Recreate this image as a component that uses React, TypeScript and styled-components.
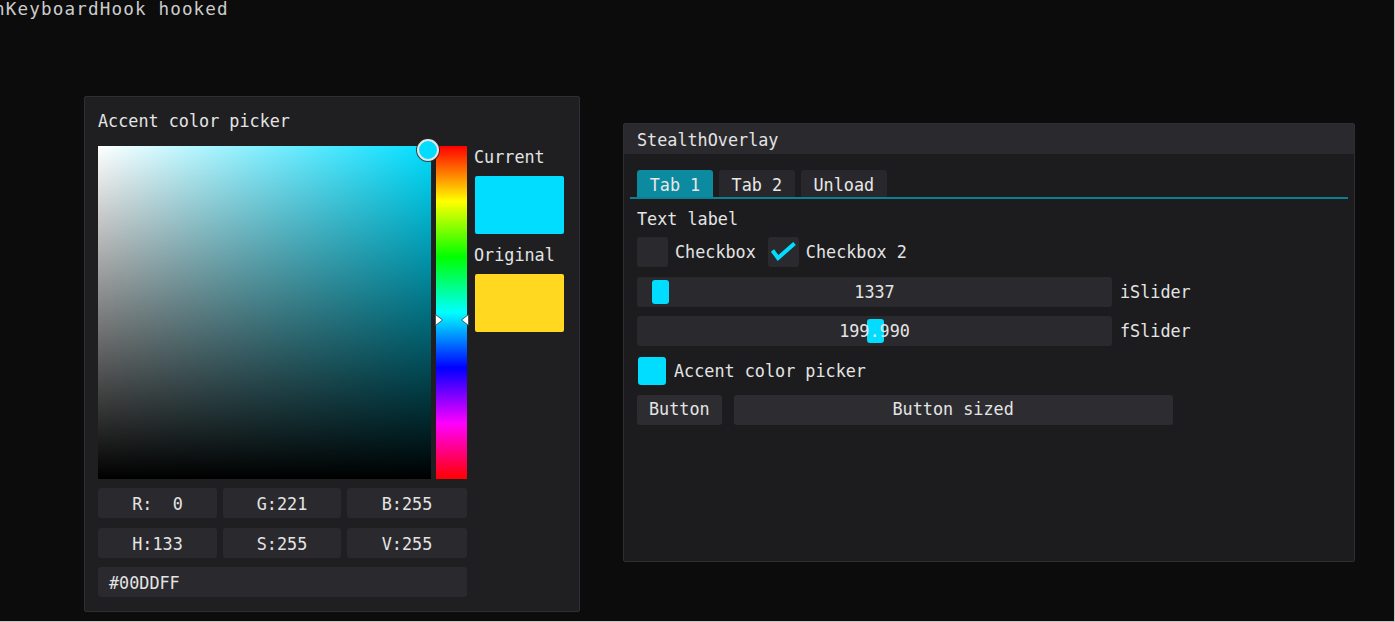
import React from "react";
import styled, { createGlobalStyle } from "styled-components";

const GlobalStyle = createGlobalStyle`
  html, body { margin: 0; padding: 0; background: #0c0c0c; }
  #root { width: 1395px; height: 622px; }
`;

const MONO = `"DejaVu Sans Mono", "Liberation Mono", monospace`;
const ACCENT = "#00ddff";

const Desktop = styled.div`
  position: relative;
  width: 1395px;
  height: 622px;
  box-sizing: border-box;
  background: #0c0c0c;
  overflow: hidden;
  border-right: 1px solid #c4c4c4;
  border-bottom: 1px solid #c4c4c4;
  font-family: ${MONO};
  font-size: 16.8px;
  color: #e4e4e4;
`;

const ConsoleLine = styled.div`
  position: absolute;
  left: -6px;
  top: -1px;
  font-family: ${MONO};
  font-size: 17.6px;
  letter-spacing: 1.15px;
  line-height: 20px;
  color: #cccccc;
  white-space: pre;
`;

const ImWindow = styled.div<{ $x: number; $y: number; $w: number; $h: number; $bg: string }>`
  position: absolute;
  left: ${(p) => p.$x}px;
  top: ${(p) => p.$y}px;
  width: ${(p) => p.$w}px;
  height: ${(p) => p.$h}px;
  box-sizing: border-box;
  background: ${(p) => p.$bg};
  border: 1px solid #2f2f33;
  border-radius: 2px;
  display: flex;
  flex-direction: column;
`;

/* ---------- Color picker popup ---------- */

const PickerBody = styled.div`
  padding: 13px 13px 0 13px;
  display: flex;
  flex-direction: column;
`;

const Text = styled.div`
  height: 20px;
  line-height: 22px;
  white-space: pre;
`;

const PickerRow = styled.div`
  margin-top: 16px;
  display: flex;
  align-items: flex-start;
`;

const SVBox = styled.div<{ $hue: string }>`
  position: relative;
  width: 333px;
  height: 333px;
  background: linear-gradient(to top, #000 0%, rgba(0, 0, 0, 0) 100%),
    linear-gradient(to right, #ffffff 0%, ${(p) => p.$hue} 100%);
`;

const SVCursor = styled.div`
  position: absolute;
  left: 319px;
  top: -7px;
  width: 18px;
  height: 18px;
  border-radius: 50%;
  background: ${ACCENT};
  border: 2px solid #e6e6e6;
  box-shadow: 0 0 0 1px rgba(40, 40, 40, 0.8);
  z-index: 3;
`;

const HueBar = styled.div`
  position: relative;
  margin-left: 5px;
  width: 31px;
  height: 333px;
  background: linear-gradient(
    to bottom,
    #ff0000 0%,
    #ffff00 16.66%,
    #00ff00 33.33%,
    #00ffff 50%,
    #0000ff 66.66%,
    #ff00ff 83.33%,
    #ff0000 100%
  );
`;

const HueArrow = styled.svg<{ $side: "left" | "right"; $top: number }>`
  position: absolute;
  top: ${(p) => p.$top}px;
  ${(p) => (p.$side === "left" ? "left: -1px;" : "right: -2px;")}
  width: 8px;
  height: 12px;
  z-index: 2;
`;

const SideColumn = styled.div`
  margin-left: 7px;
  padding-top: 1px;
  display: flex;
  flex-direction: column;
`;

const SideLabel = styled.div<{ $gapTop?: number }>`
  height: 20px;
  line-height: 21px;
  margin-top: ${(p) => p.$gapTop ?? 0}px;
`;

const Swatch = styled.div<{ $color: string }>`
  margin: 9px 0 0 1px;
  width: 89px;
  height: 58px;
  border-radius: 2px;
  background: ${(p) => p.$color};
`;

const FieldGrid = styled.div`
  margin-top: 9px;
  width: 369px;
  display: grid;
  grid-template-columns: 119px 118px 120px;
  column-gap: 6px;
  row-gap: 9.5px;
`;

const Field = styled.div<{ $align?: "left" | "center"; $span?: number }>`
  height: 30px;
  line-height: 32px;
  border-radius: 3px;
  background: #2a2a2e;
  white-space: pre;
  text-align: ${(p) => p.$align ?? "center"};
  padding-left: ${(p) => (p.$align === "left" ? "11px" : "0")};
  grid-column: span ${(p) => p.$span ?? 1};
`;

/* ---------- StealthOverlay window ---------- */

const TitleBar = styled.div`
  height: 30px;
  line-height: 32px;
  padding-left: 13px;
  background: #2a2a2e;
  white-space: pre;
`;

const OverlayBody = styled.div`
  padding: 16px 6px 0 6px;
  display: flex;
  flex-direction: column;
`;

const TabBar = styled.div`
  display: flex;
  gap: 6px;
  padding-left: 7px;
  border-bottom: 2px solid #0d7f92;
`;

const Tab = styled.div<{ $active?: boolean }>`
  height: 27px;
  line-height: 30px;
  padding: 0 12.7px;
  border-radius: 3px 3px 0 0;
  background: ${(p) => (p.$active ? "#0b8aa0" : "#28282c")};
  color: #e8e8e8;
  white-space: pre;
`;

const Content = styled.div`
  margin-top: 9px;
  padding-left: 7px;
  display: flex;
  flex-direction: column;
  gap: 9.4px;
`;

const Row = styled.div`
  display: flex;
  align-items: center;
  height: 30px;
`;

const CheckBox = styled.div<{ $gapLeft?: number }>`
  width: 31px;
  height: 30px;
  border-radius: 3px;
  background: #2a2a2e;
  margin-left: ${(p) => p.$gapLeft ?? 0}px;
  display: flex;
  align-items: center;
  justify-content: center;
`;

const ItemLabel = styled.span`
  margin-left: 7px;
  line-height: 30px;
  white-space: pre;
`;

const SliderFrame = styled.div`
  position: relative;
  width: 475px;
  height: 30px;
  border-radius: 3px;
  background: #2a2a2e;
`;

const SliderGrab = styled.div<{ $pos: number }>`
  position: absolute;
  top: 3px;
  left: ${(p) => p.$pos}px;
  width: 17px;
  height: 24px;
  border-radius: 3px;
  background: ${ACCENT};
`;

const SliderValue = styled.div`
  position: relative;
  z-index: 1;
  height: 30px;
  line-height: 30px;
  text-align: center;
  white-space: pre;
`;

const SliderLabel = styled.span`
  margin-left: 8px;
  line-height: 30px;
`;

const ColorButton = styled.div<{ $color: string }>`
  margin: 1px;
  width: 28px;
  height: 28px;
  border-radius: 3px;
  background: ${(p) => p.$color};
`;

const Button = styled.div<{ $width?: number; $gapLeft?: number }>`
  height: 30px;
  line-height: 29px;
  border-radius: 3px;
  background: #2d2d31;
  text-align: center;
  white-space: pre;
  padding: ${(p) => (p.$width ? "0" : "0 12px")};
  width: ${(p) => (p.$width ? `${p.$width}px` : "auto")};
  margin-left: ${(p) => p.$gapLeft ?? 0}px;
`;

const Arrow = ({ side, top }: { side: "left" | "right"; top: number }) => (
  <HueArrow $side={side} $top={top} viewBox="0 0 8 12">
    {side === "left" ? (
      <polygon points="0.5,0.5 7.5,6 0.5,11.5" fill="#ffffff" stroke="#3a3a3a" strokeWidth="0.8" />
    ) : (
      <polygon points="7.5,0.5 0.5,6 7.5,11.5" fill="#ffffff" stroke="#3a3a3a" strokeWidth="0.8" />
    )}
  </HueArrow>
);

const CheckMark = () => (
  <svg width="31" height="30" viewBox="0 0 31 30">
    <polyline
      points="4.5,13.5 10,21 26.5,6.5"
      fill="none"
      stroke={ACCENT}
      strokeWidth="4"
      strokeLinecap="butt"
      strokeLinejoin="miter"
    />
  </svg>
);

export default function App() {
  return (
    <>
      <GlobalStyle />
      <Desktop>
        <ConsoleLine>nKeyboardHook hooked</ConsoleLine>

        <ImWindow $x={84} $y={96} $w={496} $h={516} $bg="#1f1f22">
          <PickerBody>
            <Text>Accent color picker</Text>
            <PickerRow>
              <SVBox $hue="#00deff">
                <SVCursor />
              </SVBox>
              <HueBar>
                <Arrow side="left" top={168} />
                <Arrow side="right" top={168} />
              </HueBar>
              <SideColumn>
                <SideLabel>Current</SideLabel>
                <Swatch $color={ACCENT} />
                <SideLabel $gapTop={11}>Original</SideLabel>
                <Swatch $color="#ffd81f" />
              </SideColumn>
            </PickerRow>
            <FieldGrid>
              <Field>{"R:  0"}</Field>
              <Field>G:221</Field>
              <Field>B:255</Field>
              <Field>H:133</Field>
              <Field>S:255</Field>
              <Field>V:255</Field>
              <Field $align="left" $span={3}>#00DDFF</Field>
            </FieldGrid>
          </PickerBody>
        </ImWindow>

        <ImWindow $x={623} $y={123} $w={732} $h={439} $bg="#1c1c1e">
          <TitleBar>StealthOverlay</TitleBar>
          <OverlayBody>
            <TabBar>
              <Tab $active>Tab 1</Tab>
              <Tab>Tab 2</Tab>
              <Tab>Unload</Tab>
            </TabBar>
            <Content>
              <Text>Text label</Text>
              <Row>
                <CheckBox />
                <ItemLabel>Checkbox</ItemLabel>
                <CheckBox $gapLeft={12}>
                  <CheckMark />
                </CheckBox>
                <ItemLabel>Checkbox 2</ItemLabel>
              </Row>
              <Row>
                <SliderFrame>
                  <SliderGrab $pos={15} />
                  <SliderValue>1337</SliderValue>
                </SliderFrame>
                <SliderLabel>iSlider</SliderLabel>
              </Row>
              <Row>
                <SliderFrame>
                  <SliderGrab $pos={230} />
                  <SliderValue>199.990</SliderValue>
                </SliderFrame>
                <SliderLabel>fSlider</SliderLabel>
              </Row>
              <Row>
                <ColorButton $color={ACCENT} />
                <ItemLabel>Accent color picker</ItemLabel>
              </Row>
              <Row>
                <Button>Button</Button>
                <Button $width={439} $gapLeft={12}>Button sized</Button>
              </Row>
            </Content>
          </OverlayBody>
        </ImWindow>
      </Desktop>
    </>
  );
}
